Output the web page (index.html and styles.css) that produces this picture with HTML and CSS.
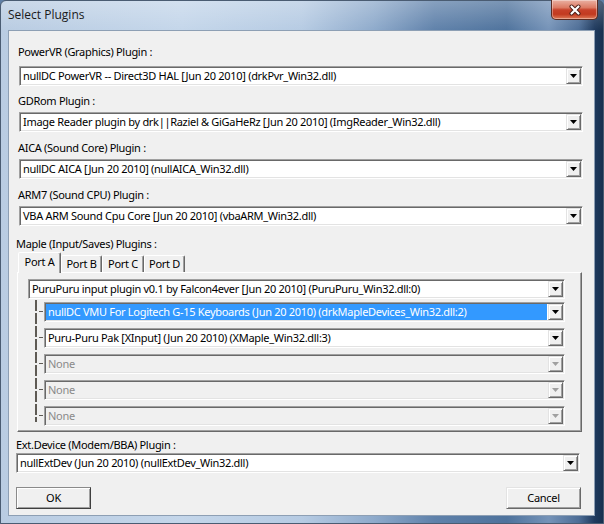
FILE: index.html
```html
<!DOCTYPE html>
<html>
<head>
<meta charset="utf-8">
<title>Select Plugins</title>
<link rel="stylesheet" href="styles.css">
</head>
<body>
<div class="window">
  <div class="titlebar">
    <div class="title">Select Plugins</div>
    <div class="close">
      <svg width="14" height="12" viewBox="0 0 14 12"><path d="M3.5 2.5 L10.5 9.5 M10.5 2.5 L3.5 9.5" stroke="#4a1e16" stroke-width="4" stroke-linecap="round"/><path d="M3.5 2.5 L10.5 9.5 M10.5 2.5 L3.5 9.5" stroke="#ffffff" stroke-width="2.2" stroke-linecap="round"/></svg>
    </div>
  </div>
  <div class="client">
    <div class="lbl lbl-top first">PowerVR (Graphics) Plugin :</div>
    <div class="combo combo-top c1"><span class="val">nullDC PowerVR -- Direct3D HAL [Jun 20 2010] (drkPvr_Win32.dll)</span><span class="drop"><svg width="7" height="4" viewBox="0 0 7 4"><polygon points="0,0 7,0 3.5,4" fill="#000"/></svg></span></div>

    <div class="lbl lbl-top l2">GDRom Plugin :</div>
    <div class="combo combo-top">
      <span class="val">Image Reader plugin by drk||Raziel &amp; GiGaHeRz [Jun 20 2010] (ImgReader_Win32.dll)</span><span class="drop"><svg width="7" height="4" viewBox="0 0 7 4"><polygon points="0,0 7,0 3.5,4" fill="#000"/></svg></span></div>

    <div class="lbl lbl-top l3">AICA (Sound Core) Plugin :</div>
    <div class="combo combo-top">
      <span class="val">nullDC AICA [Jun 20 2010] (nullAICA_Win32.dll)</span><span class="drop"><svg width="7" height="4" viewBox="0 0 7 4"><polygon points="0,0 7,0 3.5,4" fill="#000"/></svg></span></div>

    <div class="lbl lbl-top l3">ARM7 (Sound CPU) Plugin :</div>
    <div class="combo combo-top">
      <span class="val">VBA ARM Sound Cpu Core [Jun 20 2010] (vbaARM_Win32.dll)</span><span class="drop"><svg width="7" height="4" viewBox="0 0 7 4"><polygon points="0,0 7,0 3.5,4" fill="#000"/></svg></span></div>

    <div class="lbl lbl-low maple">Maple (Input/Saves) Plugins :</div>
    <div class="tabs">
      <div class="tab active">Port A</div>
      <div class="tab">Port B</div>
      <div class="tab">Port C</div>
      <div class="tab">Port D</div>
    </div>
    <div class="panel">
      <div class="combo"><span class="val">PuruPuru input plugin v0.1 by Falcon4ever [Jun 20 2010] (PuruPuru_Win32.dll:0)</span><span class="drop"><svg width="7" height="4" viewBox="0 0 7 4"><polygon points="0,0 7,0 3.5,4" fill="#000"/></svg></span></div>
      <div class="tree">
        <div class="branch"><span class="tick"></span><div class="combo selected"><span class="val">nullDC VMU For Logitech G-15 Keyboards (Jun 20 2010) (drkMapleDevices_Win32.dll:2)</span><span class="drop"><svg width="7" height="4" viewBox="0 0 7 4"><polygon points="0,0 7,0 3.5,4" fill="#000"/></svg></span></div></div>
        <div class="branch"><span class="tick"></span><div class="combo"><span class="val">Puru-Puru Pak [XInput] (Jun 20 2010) (XMaple_Win32.dll:3)</span><span class="drop"><svg width="7" height="4" viewBox="0 0 7 4"><polygon points="0,0 7,0 3.5,4" fill="#000"/></svg></span></div></div>
        <div class="branch"><span class="tick"></span><div class="combo disabled"><span class="val">None</span><span class="drop"><svg width="7" height="4" viewBox="0 0 7 4"><polygon points="0,0 7,0 3.5,4" fill="#a0a0a0"/></svg></span></div></div>
        <div class="branch"><span class="tick"></span><div class="combo disabled"><span class="val">None</span><span class="drop"><svg width="7" height="4" viewBox="0 0 7 4"><polygon points="0,0 7,0 3.5,4" fill="#a0a0a0"/></svg></span></div></div>
        <div class="branch"><span class="tick"></span><div class="combo disabled"><span class="val">None</span><span class="drop"><svg width="7" height="4" viewBox="0 0 7 4"><polygon points="0,0 7,0 3.5,4" fill="#a0a0a0"/></svg></span></div></div>
      </div>
    </div>

    <div class="lbl lbl-low ext">Ext.Device (Modem/BBA) Plugin :</div>
    <div class="combo combo-ext"><span class="val">nullExtDev (Jun 20 2010) (nullExtDev_Win32.dll)</span><span class="drop"><svg width="7" height="4" viewBox="0 0 7 4"><polygon points="0,0 7,0 3.5,4" fill="#000"/></svg></span></div>

    <div class="buttons">
      <div class="btn default">OK</div>
      <div class="btn">Cancel</div>
    </div>
  </div>
</div>
</body>
</html>
```
FILE: styles.css
```css
* { box-sizing: border-box; }
html, body { margin: 0; padding: 0; }
body {
  width: 604px;
  height: 524px;
  overflow: hidden;
  background: #5f7fa6;
  font-family: "Noto Sans", "DejaVu Sans", sans-serif;
  font-size: 11px;
  letter-spacing: -0.3px;
  color: #000;
}
.window {
  width: 604px;
  height: 524px;
  display: flex;
  flex-direction: column;
  border-radius: 6px 6px 0 0;
  background:
    linear-gradient(to bottom, rgba(255,255,255,0.25), rgba(255,255,255,0) 30px),
    linear-gradient(to right, #b9cce2 0%, #c4d6ea 30%, #b6cbe3 50%, #8eaacb 62%, #5f81aa 72%, #4e729c 84%, #7593b8 91%, #4d6d96 96%, #1f3a5e 98.6%, #17304f 100%);
  border: 1px solid #4a5c72;
}
.titlebar {
  height: 29px;
  display: flex;
  align-items: flex-start;
}
.title {
  margin: 5px 0 0 7px;
  font-family: "Open Sans", "Noto Sans", sans-serif;
  font-size: 12px;
  letter-spacing: 0;
  line-height: 18px;
  color: #1a1a1a;
}
.close {
  margin-left: auto;
  margin-right: 5px;
  margin-top: -1px;
  width: 47px;
  height: 20px;
  border: 1px solid #5c2c22;
  border-top: none;
  border-radius: 0 0 5px 5px;
  background: linear-gradient(to bottom, #eab1a3 0%, #dc7a63 40%, #c7412a 52%, #c23a20 75%, #de7a58 100%);
  display: flex;
  align-items: center;
  justify-content: center;
  box-shadow: inset 0 0 0 1px rgba(255,255,255,0.35);
}
.client {
  flex: 1;
  margin: 0 8px 7px 7px;
  background: #f0f0f0;
  border: 1px solid #8d9fb4;
  display: flex;
  flex-direction: column;
}
.lbl {
  line-height: 14px;
  height: 14px;
  white-space: nowrap;
}
.lbl-top { margin-left: 9px; }
.lbl-top.first { margin-top: 14px; }
.lbl-top.l2 { margin-top: 8px; }
.lbl-top.l3 { margin-top: 9px; }
.lbl-low { margin-left: 7px; }
.maple { margin-top: 11px; }
.ext { margin-top: 6px; }

.combo {
  height: 20px;
  display: flex;
  align-items: stretch;
  background: #fff;
  border: 1px solid;
  border-color: #a0a0a0 #ffffff #ffffff #a0a0a0;
  box-shadow: inset 1px 1px 0 #696969, inset -1px -1px 0 #e3e3e3;
  padding: 1px;
}
.combo .val {
  flex: 1;
  min-width: 0;
  padding-left: 2px;
  line-height: 16px;
  white-space: nowrap;
  overflow: hidden;
}
.combo .drop {
  width: 15px;
  flex: none;
  background: #f0f0f0;
  border: 1px solid;
  border-color: #e3e3e3 #696969 #696969 #e3e3e3;
  box-shadow: inset 1px 1px 0 #fff, inset -1px -1px 0 #a0a0a0;
  display: flex;
  align-items: center;
  justify-content: center;
}
.combo-top { margin: 4px 11px 0 10px; }
.combo-top.c1 { margin-top: 7px; }
.combo-ext { margin: 1px 14px 0 7px; }
.combo.selected .val {
  background: #3399ff;
  color: #fff;
  margin-right: 1px;
}
.combo.disabled { background: #f0f0f0; }
.combo.disabled .val { color: #8a8a8a; }

.tabs {
  margin: 1px 0 0 9px;
  height: 20px;
  display: flex;
  align-items: flex-end;
  position: relative;
  z-index: 1;
}
.tab {
  height: 17px;
  line-height: 16px;
  text-align: center;
  border: 1px solid;
  border-bottom: none;
  border-color: #ffffff #696969 transparent #ffffff;
  box-shadow: inset -1px 0 0 #a0a0a0;
  border-radius: 2px 2px 0 0;
  background: #f0f0f0;
  white-space: nowrap;
  width: 41px;
}
.tab:nth-child(3) { width: 42px; }
.tab.active {
  height: 21px;
  width: 43px;
  line-height: 18px;
  margin-bottom: -1px;
}
.panel {
  margin: 0 12px 0 8px;
  height: 160px;
  border: 1px solid;
  border-color: #ffffff #696969 #696969 #ffffff;
  box-shadow: inset -1px -1px 0 #a0a0a0;
  padding: 6px 16px 0 10px;
  display: flex;
  flex-direction: column;
}
.tree {
  margin-left: 7px;
  padding: 3px 0 0 9px;
  display: flex;
  flex-direction: column;
  gap: 6px;
  background: repeating-linear-gradient(to bottom, #5e5a54 0 11px, transparent 11px 13px) no-repeat 0 1px / 2px 122px;
}
.branch {
  display: flex;
  align-items: center;
  position: relative;
}
.branch .combo { flex: 1; }
.tick {
  position: absolute;
  left: -5px;
  top: 9px;
  width: 4px;
  height: 1px;
  background: #5e5a54;
}
.buttons {
  margin: 14px 13px 0 7px;
  display: flex;
  justify-content: space-between;
}
.btn {
  width: 75px;
  height: 22px;
  line-height: 20px;
  text-align: center;
  background: #f0f0f0;
  border: 1px solid;
  border-color: #e3e3e3 #696969 #696969 #e3e3e3;
  box-shadow: inset 1px 1px 0 #fff, inset -1px -1px 0 #a0a0a0;
}
.btn.default {
  border-color: #8a8a8a #3f3f3f #3f3f3f #8a8a8a;
}
```
